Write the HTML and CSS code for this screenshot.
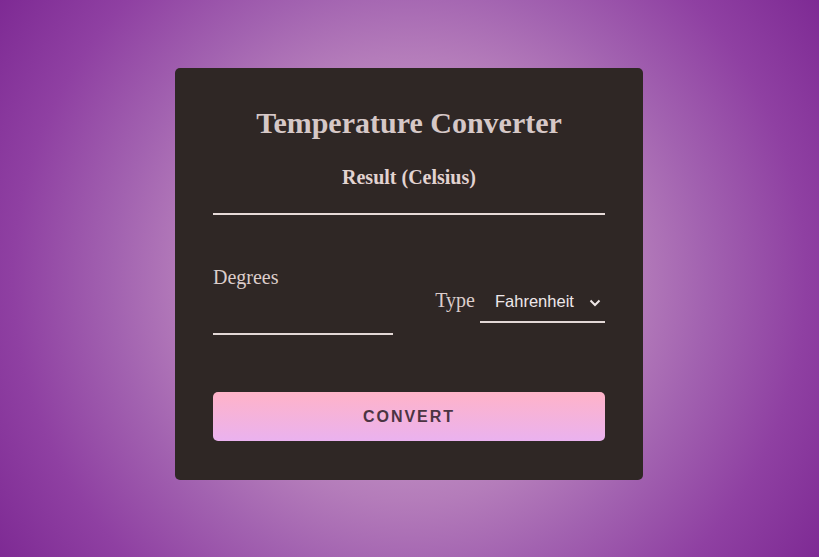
FILE: index.html
```html
<!DOCTYPE html>
<html>
<head>
<meta charset="utf-8">
<link rel="stylesheet" href="styles.css">
</head>
<body>
<div class="card">
  <h1 class="title">Temperature Converter</h1>
  <div class="result-label">Result (Celsius)</div>
  <div class="result-line"></div>
  <div class="row">
    <div class="degrees">
      <label class="label">Degrees</label>
      <input class="deg-input" type="text">
    </div>
    <div class="type">
      <span class="label">Type</span>
      <div class="select">
        <span class="select-text">Fahrenheit</span>
        <svg class="chev" width="12" height="8" viewBox="0 0 12 8"><path d="M1.5 1.5 L6 6 L10.5 1.5" fill="none" stroke="#eee6e6" stroke-width="2"/></svg>
      </div>
    </div>
  </div>
  <button class="btn">CONVERT</button>
</div>
</body>
</html>
```
FILE: styles.css
```css
html, body { margin: 0; padding: 0; }
body {
  width: 819px;
  height: 557px;
  background: radial-gradient(circle at 50% 50%, #d2a8d2 0%, #c291c4 30%, #b47cba 45%, #a262b0 60%, #8f40a2 80%, #7e2a94 100%);
  font-family: "Liberation Serif", serif;
  overflow: hidden;
}
.card {
  box-sizing: border-box;
  width: 468px;
  height: 412px;
  margin: 68px 0 0 175px;
  background: #2f2725;
  border-radius: 5px;
  padding: 39px 38px 0;
  color: #d8c9c8;
}
.title {
  margin: 0;
  text-align: center;
  font-size: 30px;
  font-weight: bold;
  line-height: 32px;
  color: #d6c8c7;
}
.result-label {
  margin-top: 26px;
  text-align: center;
  font-weight: bold;
  font-size: 20px;
  line-height: 24px;
  color: #e2d3d1;
}
.result-line {
  margin-top: 24px;
  height: 2px;
  background: #e6dad8;
}
.row {
  display: flex;
  justify-content: space-between;
  align-items: flex-start;
  margin-top: 50px;
}
.degrees {
  display: flex;
  flex-direction: column;
  width: 180px;
}
.label {
  font-size: 20px;
  line-height: 24px;
  color: #dccdcb;
}
.deg-input {
  margin-top: 28px;
  background: transparent;
  border: none;
  border-bottom: 2px solid #e3d8d6;
  height: 16px;
  padding: 0;
  outline: none;
}
.type {
  display: flex;
  align-items: center;
  margin-top: 14px;
  gap: 5px;
}
.type .label { margin-top: -2px; }
.select {
  display: flex;
  align-items: center;
  justify-content: space-between;
  width: 125px;
  box-sizing: border-box;
  height: 44px;
  padding: 2px 4px 0 15px;
  border-bottom: 2px solid #e3d8d6;
}
.select-text {
  font-family: "Liberation Sans", Arial, sans-serif;
  font-size: 16.5px;
  color: #eee7ea;
}
.chev { margin-top: 3px; }
.btn {
  display: block;
  width: 100%;
  height: 49px;
  margin-top: 57px;
  border: none;
  border-radius: 5px;
  background: linear-gradient(to bottom, #ffb3c8, #eab2ef);
  font-family: "Liberation Sans", Arial, sans-serif;
  font-weight: bold;
  font-size: 16px;
  letter-spacing: 2px;
  color: #4b3442;
  padding: 0;
}
```
